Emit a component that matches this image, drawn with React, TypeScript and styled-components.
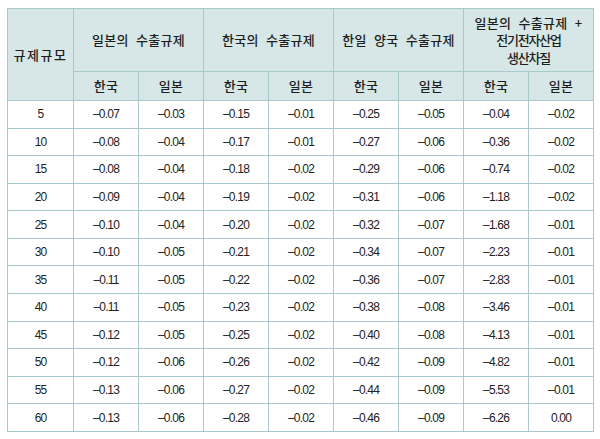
import React from "react";
import styled, { createGlobalStyle } from "styled-components";

const Global = createGlobalStyle`
  html, body { margin: 0; padding: 0; background: #ffffff; }
  body { width: 600px; height: 439px; overflow: hidden; }
`;

const Table = styled.table`
  margin: 8px 0 0 7px;
  width: 587px;
  table-layout: fixed;
  border-collapse: collapse;
  border: 1px solid #a9c9cc;
`;

const HeadCell = styled.th<{ $h?: number }>`
  background: #d7e6e6;
  border: 1px solid #a9c9cc;
  padding: 0;
  height: ${(p) => p.$h ?? 28}px;
  font-family: "Noto Sans CJK KR", "Noto Sans", sans-serif;
  font-size: 13px;
  font-weight: 500;
  color: #1e1e1e;
  line-height: 17.5px;
  text-align: center;
  vertical-align: middle;
  word-spacing: 4px;
  letter-spacing: 0.3px;
`;

const Tight = styled.span`
  display: block;
  letter-spacing: -1.2px;
`;

const Wide = styled.span`
  letter-spacing: 1.5px;
`;

const Row = styled.tr`
  height: 27.58px;
`;

const Cell = styled.td`
  border: 1px solid #a9c9cc;
  padding: 0;
  font-family: "Liberation Sans", Arial, sans-serif;
  font-size: 12px;
  letter-spacing: -0.8px;
  color: #222;
  text-align: center;
  vertical-align: middle;
`;

const data: [number, string[]][] = [
  [5, ["-0.07", "-0.03", "-0.15", "-0.01", "-0.25", "-0.05", "-0.04", "-0.02"]],
  [10, ["-0.08", "-0.04", "-0.17", "-0.01", "-0.27", "-0.06", "-0.36", "-0.02"]],
  [15, ["-0.08", "-0.04", "-0.18", "-0.02", "-0.29", "-0.06", "-0.74", "-0.02"]],
  [20, ["-0.09", "-0.04", "-0.19", "-0.02", "-0.31", "-0.06", "-1.18", "-0.02"]],
  [25, ["-0.10", "-0.04", "-0.20", "-0.02", "-0.32", "-0.07", "-1.68", "-0.01"]],
  [30, ["-0.10", "-0.05", "-0.21", "-0.02", "-0.34", "-0.07", "-2.23", "-0.01"]],
  [35, ["-0.11", "-0.05", "-0.22", "-0.02", "-0.36", "-0.07", "-2.83", "-0.01"]],
  [40, ["-0.11", "-0.05", "-0.23", "-0.02", "-0.38", "-0.08", "-3.46", "-0.01"]],
  [45, ["-0.12", "-0.05", "-0.25", "-0.02", "-0.40", "-0.08", "-4.13", "-0.01"]],
  [50, ["-0.12", "-0.06", "-0.26", "-0.02", "-0.42", "-0.09", "-4.82", "-0.01"]],
  [55, ["-0.13", "-0.06", "-0.27", "-0.02", "-0.44", "-0.09", "-5.53", "-0.01"]],
  [60, ["-0.13", "-0.06", "-0.28", "-0.02", "-0.46", "-0.09", "-6.26", "0.00"]],
];

const fmt = (v: string) => v.replace("-", "\u2013");

export default function App() {
  const groups = ["일본의 수출규제", "한국의 수출규제", "한일 양국 수출규제"];
  return (
    <>
      <Global />
      <Table>
        <colgroup>
          <col style={{ width: 66 }} />
          {Array.from({ length: 8 }).map((_, i) => (
            <col key={i} style={{ width: 65 }} />
          ))}
        </colgroup>
        <thead>
          <tr>
            <HeadCell rowSpan={2} $h={62}>
              <Wide>규제규모</Wide>
            </HeadCell>
            {groups.map((g) => (
              <HeadCell key={g} colSpan={2} $h={62}>
                {g}
              </HeadCell>
            ))}
            <HeadCell colSpan={2} $h={62}>
              일본의 수출규제 +
              <Tight>전기전자산업</Tight>
              <Tight>생산차질</Tight>
            </HeadCell>
          </tr>
          <tr>
            {Array.from({ length: 4 }).flatMap((_, i) => [
              <HeadCell key={`k${i}`}>한국</HeadCell>,
              <HeadCell key={`j${i}`}>일본</HeadCell>,
            ])}
          </tr>
        </thead>
        <tbody>
          {data.map(([size, vals]) => (
            <Row key={size}>
              <Cell>{size}</Cell>
              {vals.map((v, i) => (
                <Cell key={i}>{fmt(v)}</Cell>
              ))}
            </Row>
          ))}
        </tbody>
      </Table>
    </>
  );
}
